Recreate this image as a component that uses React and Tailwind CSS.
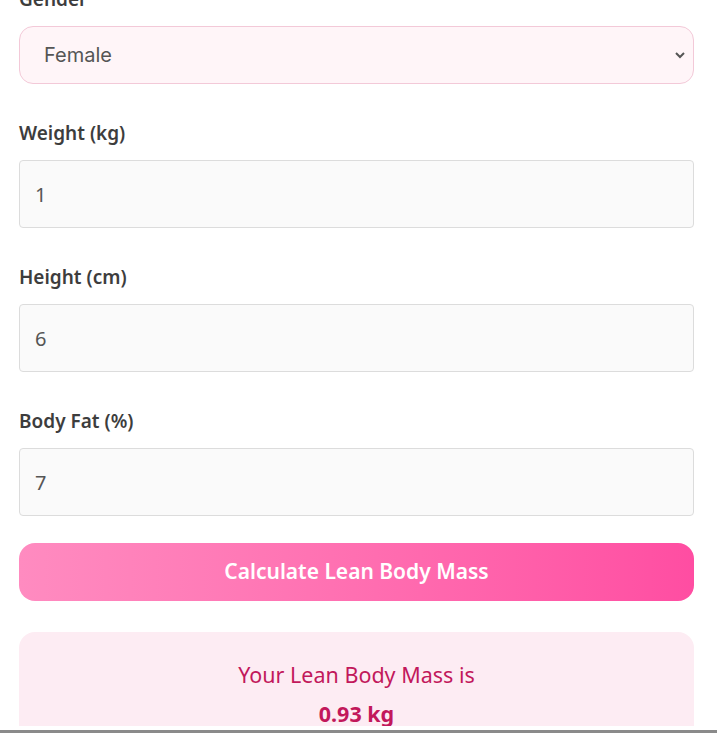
import { useState } from "react";

const labelCls =
  "block text-[19px] leading-[26px] font-semibold text-[#3d3d3d] mb-[14px]";
const inputCls =
  "w-full h-[68px] px-[15px] rounded-[4px] border border-[#dcdcdc] bg-[#fafafa] text-[20px] text-[#555] outline-none";

export default function App() {
  const [gender, setGender] = useState("Female");
  const [weight, setWeight] = useState("1");
  const [height, setHeight] = useState("6");
  const [fat, setFat] = useState("7");

  return (
    <div
      className="h-[733px] flex flex-col bg-white overflow-hidden"
      style={{ fontFamily: '"Noto Sans", "Open Sans", sans-serif' }}
    >
      <div className="h-[726px] overflow-hidden">
        <div className="pl-[19px] pr-[23px] mt-[-14px]">
          <label className={labelCls}>Gender</label>
          <div className="relative">
            <select
              value={gender}
              onChange={(e) => setGender(e.target.value)}
              className="w-full h-[58px] pl-[24px] rounded-[14px] border border-[#f3c9d8] bg-[#fff5f8] text-[20px] text-[#555] appearance-none outline-none"
              style={{ fontFamily: "Inter, sans-serif" }}
            >
              <option>Female</option>
              <option>Male</option>
            </select>
            <svg
              className="absolute right-[8px] top-[24px] pointer-events-none"
              width="12"
              height="10"
              viewBox="0 0 12 10"
              fill="none"
              stroke="#555"
              strokeWidth="2"
            >
              <path d="M2 3l4 4 4-4" />
            </svg>
          </div>

          <label className={`${labelCls} mt-[36px]`}>Weight (kg)</label>
          <input
            className={inputCls}
            value={weight}
            onChange={(e) => setWeight(e.target.value)}
          />

          <label className={`${labelCls} mt-[36px]`}>Height (cm)</label>
          <input
            className={inputCls}
            value={height}
            onChange={(e) => setHeight(e.target.value)}
          />

          <label className={`${labelCls} mt-[36px]`}>Body Fat (%)</label>
          <input
            className={inputCls}
            value={fat}
            onChange={(e) => setFat(e.target.value)}
          />

          <button className="mt-[27px] w-full h-[58px] rounded-[16px] bg-gradient-to-r from-[#ff8bc0] to-[#ff4da2] text-white text-[21px] font-semibold">
            Calculate Lean Body Mass
          </button>

          <div className="mt-[31px] rounded-[16px] bg-[#fdecf3] pt-[28px] pb-[30px] text-center text-[#c2185b]">
            <p className="text-[21.5px] leading-[30px]">Your Lean Body Mass is</p>
            <p className="mt-[9px] text-[21.5px] leading-[30px] font-bold">
              0.93 kg
            </p>
          </div>
        </div>
      </div>
      <div className="h-[4px] bg-white" />
      <div className="h-[3px] bg-[#8a8a8a]" />
    </div>
  );
}
